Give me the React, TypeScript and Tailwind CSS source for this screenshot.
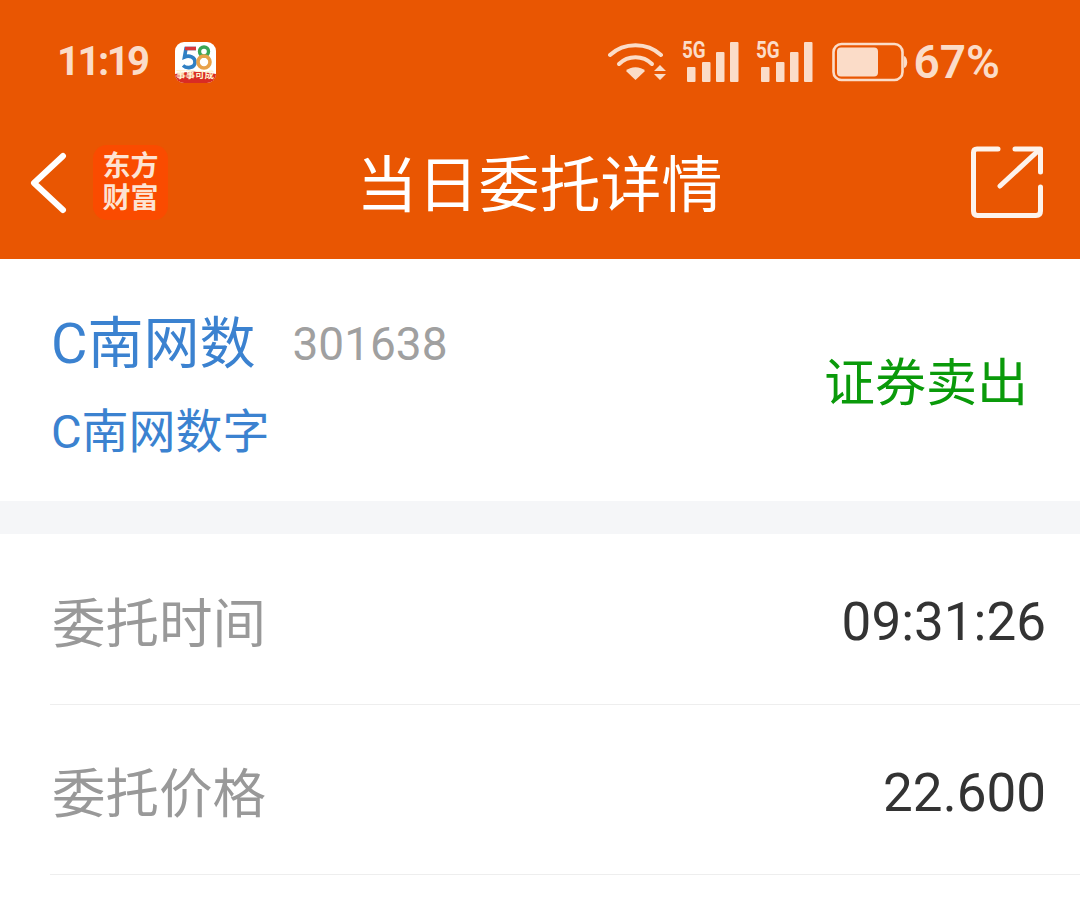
const cjk = { fontFamily: 'Roboto, "Noto Sans CJK SC", sans-serif' };

function AppBadge58() {
  return (
    <div className="relative w-[41px] h-[41px] rounded-[9px] bg-white overflow-hidden">
      <svg viewBox="0 0 41 41" className="w-full h-full">
        <path d="M21 6.500 H11 L9.500 15 C14 13 20.500 15 20 20.500 C19.500 26 12 27 8 23.500" fill="none" stroke="#2f7fc4" strokeWidth="3.600" />
        <path d="M10 6.500 H21" stroke="#d8373a" strokeWidth="3.600" />
        <circle cx="29" cy="9.500" r="4.500" fill="none" stroke="#3aa655" strokeWidth="3.400" />
        <circle cx="29" cy="20" r="6" fill="none" stroke="#e8a24a" strokeWidth="3.600" />
        <path d="M0 32 Q20 27 41 32 V41 H0 Z" fill="#d92c24" />
      </svg>
      <span className="absolute left-0 right-0 bottom-[3px] text-center text-[9.5px] leading-[11px] font-bold text-[#fff3d0] whitespace-nowrap" style={cjk}>
        事事可成
      </span>
    </div>
  );
}

function Wifi() {
  return (
    <svg viewBox="0 0 58 42" className="w-[58px] h-[42px]" fill="none" stroke="#fbdcc8" strokeLinecap="round">
      <path d="M2 14 C16 1 39 1 53 14" strokeWidth="4" />
      <path d="M11 23 C20 14 35 14 44 23" strokeWidth="4" />
      <path d="M27.500 39 L18 30 C22 25 33 25 37 30 Z" fill="#fbdcc8" stroke="none" />
      <path d="M52 24 L58 30 H46 Z M46 33 H58 L52 39 Z" fill="#fbdcc8" stroke="none" />
    </svg>
  );
}

function Signal() {
  return (
    <div className="relative w-[58px] h-[42px]">
      <span className="absolute left-0 top-[-2px] text-[23px] leading-[23px] font-bold text-[#fbdcc8] origin-left scale-x-[0.82]" style={cjk}>
        5G
      </span>
      <svg viewBox="0 0 58 42" className="w-full h-full" fill="#fbdcc8">
        <rect x="5" y="26" width="8.500" height="15" rx="1" />
        <rect x="20" y="21" width="8.500" height="20" rx="1" />
        <rect x="34" y="11" width="8.500" height="30" rx="1" />
        <rect x="48" y="1" width="8.500" height="40" rx="1" />
      </svg>
    </div>
  );
}

function Battery() {
  return (
    <svg viewBox="0 0 76 40" className="w-[76px] h-[40px]">
      <rect x="1.500" y="2" width="69" height="36" rx="8" fill="none" stroke="#fbdcc8" strokeWidth="2.600" />
      <rect x="5" y="5.500" width="41" height="29" rx="4" fill="#fbdcc8" />
      <path d="M72 14 C76 15 76.500 25 72 26 Z" fill="#fbdcc8" />
    </svg>
  );
}

function InfoRow({ label, value, rowClass }: { label: string; value: string; rowClass: string }) {
  return (
    <div className={`${rowClass} pl-[52px] pr-[34px] flex items-center justify-between relative`}>
      <span className="text-[53.5px] leading-none text-[#999999] mt-[10px]">{label}</span>
      <span className="text-[53px] leading-none text-[#333333] mt-[6px]">{value}</span>
      <div className="absolute left-[50px] right-0 bottom-0 h-px bg-[#eeeeee]" />
    </div>
  );
}

export default function App() {
  return (
    <div className="w-[1080px] h-[909px] overflow-hidden bg-white" style={cjk}>
      <div className="bg-[#e95602] h-[259px]">
        {/* status bar */}
        <div className="h-[124px] pl-[57px] pr-[80px] flex items-center justify-between">
          <div className="flex items-center gap-[27px]">
            <span className="text-[40px] leading-none font-bold tracking-[-2.5px] text-[#fbdcc8]">11:19</span>
            <AppBadge58 />
          </div>
          <div className="flex items-center">
            <Wifi />
            <div className="ml-[16px]"><Signal /></div>
            <div className="ml-[16px]"><Signal /></div>
            <div className="ml-[18px]"><Battery /></div>
            <span className="ml-[6px] text-[46px] leading-none font-semibold text-[#fbdcc8]">67%</span>
          </div>
        </div>
        {/* title bar */}
        <div className="h-[135px] pb-[10px] relative flex items-center justify-center">
          <div className="absolute left-[30px] top-[21px] flex items-center gap-[25px]">
            <svg viewBox="0 0 38 62" className="w-[38px] h-[62px]" fill="none" stroke="white" strokeWidth="6" strokeLinecap="round" strokeLinejoin="round">
              <path d="M33 4 L4 31 L33 58" />
            </svg>
            <div className="w-[75px] h-[75px] rounded-[14px] bg-[#fa4b00] flex flex-col items-center justify-center text-[#fde3d3] text-[28px] leading-[32px] font-bold">
              <span>东方</span>
              <span>财富</span>
            </div>
          </div>
          <span className="text-[61px] leading-none text-white whitespace-nowrap -ml-[1px]">当日委托详情</span>
          <svg viewBox="0 0 72 72" className="absolute left-[971px] top-[22px] w-[72px] h-[72px]" fill="none" stroke="#fdf3ec" strokeWidth="5" strokeLinecap="round" strokeLinejoin="round">
            <path d="M27 3 H6 Q2.500 3 2.500 6.500 V65 Q2.500 69.500 6.500 69.500 H65 Q69.500 69.500 69.500 65 V41" />
            <path d="M29 40 L68 4" />
            <path d="M44 3 H69.500 V26" />
          </svg>
        </div>
      </div>

      {/* stock info */}
      <div className="h-[242px] pl-[51px] pr-[52px] flex items-center justify-between">
        <div className="flex flex-col mt-[10px]">
          <div className="flex items-center gap-[37px]">
            <span className="text-[56px] leading-[64px] text-[#3b82d0]">C南网数</span>
            <span className="text-[46px] leading-[64px] text-[#a0a0a0]">301638</span>
          </div>
          <span className="mt-[30px] text-[47px] leading-[52px] text-[#3b82d0]">C南网数字</span>
        </div>
        <span className="text-[51px] leading-none text-[#0a9a0a] mt-[7px]">证券卖出</span>
      </div>
      <div className="h-[33px] bg-[#f5f6f8]" />

      <InfoRow label="委托时间" value="09:31:26" rowClass="h-[171px]" />
      <InfoRow label="委托价格" value="22.600" rowClass="h-[170px]" />
    </div>
  );
}
